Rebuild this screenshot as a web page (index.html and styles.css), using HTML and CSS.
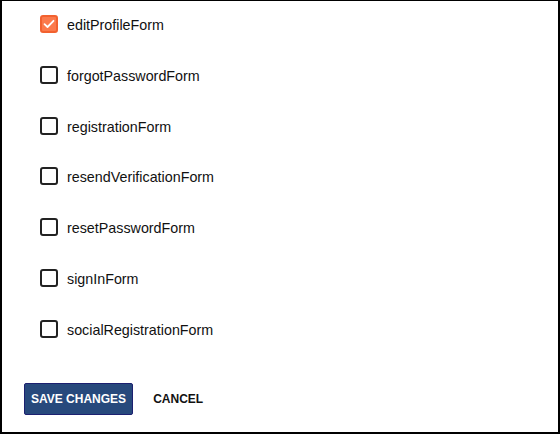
FILE: index.html
```html
<!DOCTYPE html>
<html>
<head>
    <meta charset="UTF-8">
    <title>Forms</title>
    <link rel="stylesheet" href="styles.css">
</head>
<body>
    <div class="panel">
        <ul class="form-list">
            <li class="form-item">
                <span class="check checked">
                    <svg width="12" height="10" viewBox="0 0 12 10"><path d="M1.5 5.2 L4.5 8 L10.5 1.8" fill="none" stroke="#fff" stroke-width="1.8" stroke-linecap="round" stroke-linejoin="round"/></svg>
                </span>
                <span class="label">editProfileForm</span>
            </li>
            <li class="form-item"><span class="check"></span><span class="label">forgotPasswordForm</span></li>
            <li class="form-item"><span class="check"></span><span class="label">registrationForm</span></li>
            <li class="form-item"><span class="check"></span><span class="label">resendVerificationForm</span></li>
            <li class="form-item"><span class="check"></span><span class="label">resetPasswordForm</span></li>
            <li class="form-item"><span class="check"></span><span class="label">signInForm</span></li>
            <li class="form-item"><span class="check"></span><span class="label">socialRegistrationForm</span></li>
        </ul>
        <div class="actions">
            <button class="btn-save">SAVE CHANGES</button>
            <button class="btn-cancel">CANCEL</button>
        </div>
    </div>
</body>
</html>
```

FILE: styles.css
```css
html, body {
    margin: 0;
    padding: 0;
    background-color: white;
}
.panel {
    box-sizing: border-box;
    width: 560px;
    height: 434px;
    border: 2px solid #000;
    border-top-width: 1px;
    padding: 14px 0 0 38px;
    font-family: "Liberation Sans", Arial, sans-serif;
    color: #111;
}
.form-list {
    list-style: none;
    margin: 0;
    padding: 0;
    display: flex;
    flex-direction: column;
    gap: 32.75px;
}
.form-item {
    display: flex;
    align-items: center;
    height: 18px;
}
.check {
    box-sizing: border-box;
    width: 18px;
    height: 18px;
    border: 2px solid #222;
    border-radius: 3px;
    display: flex;
    align-items: center;
    justify-content: center;
    margin-right: 9px;
}
.check.checked {
    background-color: #fb7a4c;
    border-color: #f2612f;
}
.label {
    font-size: 14.3px;
    padding-top: 2px;
}
.actions {
    display: flex;
    align-items: center;
    gap: 15px;
    margin-top: 45px;
    margin-left: -16px;
}
button {
    font-family: "Liberation Sans", Arial, sans-serif;
    font-size: 12px;
    font-weight: bold;
    height: 32px;
    padding: 0 5px;
    cursor: pointer;
}
.btn-save {
    background-color: #27497c;
    color: white;
    border: 1px solid #1c2070;
    border-radius: 2px;
    padding: 0 6px;
}
.btn-cancel {
    background: none;
    border: none;
    color: #111;
}
```
